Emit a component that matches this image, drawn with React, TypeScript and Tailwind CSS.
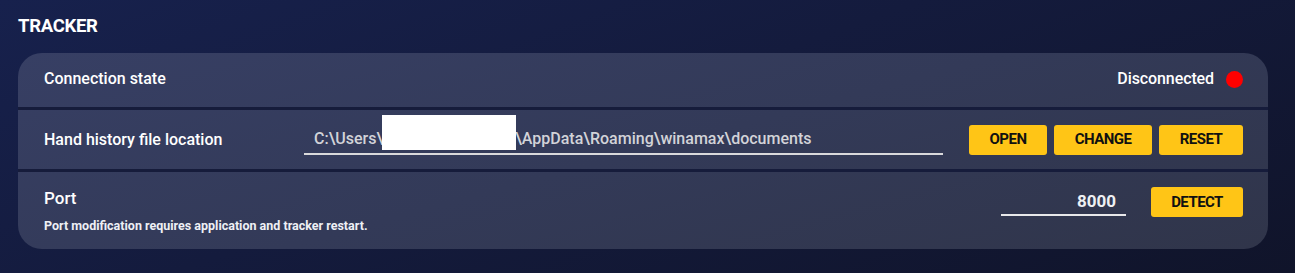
import React, { useState } from "react";

const Button = ({ label, width }: { label: string; width: string }) => (
  <button
    className={`h-[30px] ${width} rounded-[3px] bg-[#ffc516] text-[15px] font-bold tracking-[-0.55px] text-[#111111]`}
  >
    {label}
  </button>
);

export default function App() {
  const [path] = useState("C:\\Users\\");
  const [port, setPort] = useState("8000");

  return (
    <div
      className="min-h-[273px] w-full bg-[linear-gradient(160deg,#17214d_0%,#141b3d_45%,#10142a_100%)] pl-[18px] pr-[27px] pt-[14px] pb-[25px] text-white"
      style={{ fontFamily: "Roboto, 'Noto Sans', sans-serif" }}
    >
      {/* titre */}
      <h2 className="h-[25px] text-[18.5px] font-bold leading-[25px] tracking-[-0.3px]">TRACKER</h2>

      <div className="mt-[14px] overflow-hidden rounded-[24px] bg-[linear-gradient(165deg,#373f64_0%,#333a58_50%,#30354a_100%)]">
        {/* état connexion */}
        <div className="flex h-[57px] items-center justify-between border-b-[3px] border-[#161c3b] pl-[26px] pr-[25px] pb-[2px]">
          <span className="text-[16px] font-medium">Connection state</span>
          <div className="flex items-center gap-[12px]">
            <span className="text-[16px] font-medium tracking-[-0.1px]">Disconnected</span>
            <span className="h-[17px] w-[17px] rounded-full bg-[#ff0000]" />
          </div>
        </div>

        {/* fichier historique */}
        <div className="flex h-[62px] items-center border-b-[3px] border-[#161c3b] pl-[26px] pr-[25px]">
          <span className="w-[260px] text-[16px] font-medium">Hand history file location</span>
          <div className="relative h-[30px] w-[639px] border-b-2 border-[#d9d9db]">
            <span className="absolute left-[10px] top-[2px] whitespace-nowrap text-[16px] font-medium text-[#d2d3d8]">
              {path}
              <span className="inline-block w-[132px]" />
              \AppData\Roaming\winamax\documents
            </span>
            <span className="absolute left-[78px] top-[-10px] h-[35px] w-[134px] bg-white" />
          </div>
          <div className="ml-auto flex gap-[7px]">
            <Button label="OPEN" width="w-[78px]" />
            <Button label="CHANGE" width="w-[98px]" />
            <Button label="RESET" width="w-[84px]" />
          </div>
        </div>

        {/* port */}
        <div className="flex h-[77px] pl-[26px] pr-[25px]">
          <div className="flex flex-col pt-[15px]">
            <span className="text-[17px] font-medium leading-[22px]">Port</span>
            <span className="mt-[9px] text-[12.5px] font-bold leading-[16px] text-[#eef0f5]">
              Port modification requires application and tracker restart.
            </span>
          </div>
          <div className="ml-auto flex items-start gap-[25px] pt-[15px]">
            <input
              value={port}
              onChange={(e) => setPort(e.target.value)}
              className="h-[29px] w-[125px] border-b-2 border-[#e8e8ea] bg-transparent pr-[10px] text-right text-[17px] font-bold text-[#eef0f3] outline-none"
            />
            <Button label="DETECT" width="w-[92px]" />
          </div>
        </div>
      </div>
    </div>
  );
}
